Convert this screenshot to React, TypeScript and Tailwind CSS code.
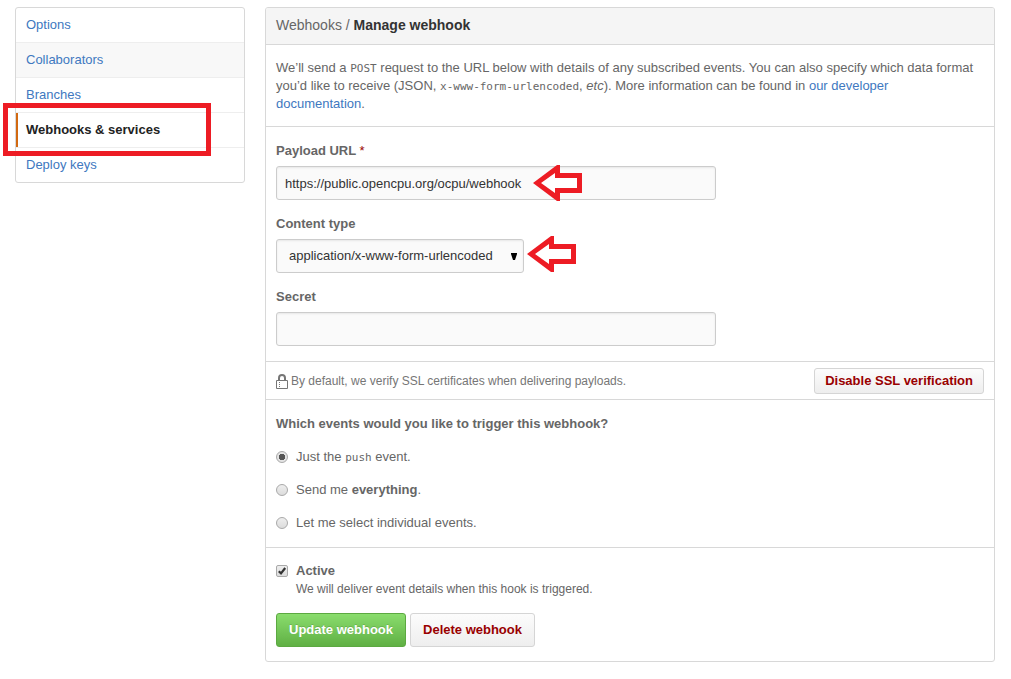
import type { ReactNode } from "react";

const navItems = [
  { label: "Options" },
  { label: "Collaborators", hovered: true },
  { label: "Branches" },
  { label: "Webhooks & services", current: true },
  { label: "Deploy keys" },
];

function Code({ children }: { children: ReactNode }) {
  return <code className="font-['DejaVu_Sans_Mono',monospace] text-[11px] leading-none">{children}</code>;
}

function Arrow({ className }: { className: string }) {
  return (
    <svg aria-hidden="true" width="49" height="36" viewBox="0 0 49 36" className={`pointer-events-none absolute ${className}`}>
      <path d="M0 18 24 0h3v8h22v20H27v8h-3Z" fill="#ed1c24" />
      <path d="M8 18 22 8v5h22v10H22v5Z" fill="#fff" />
    </svg>
  );
}

function LockIcon() {
  return (
    <svg aria-hidden="true" width="12" height="15" viewBox="0 0 12 15" fill="none">
      <path d="M3 6V4a3 3 0 0 1 6 0v2" stroke="#767676" strokeWidth="2" />
      <path d="M.5 6.5h11v8H.5Z" stroke="#767676" />
      <path d="M3 8h1v1H3zM3 10h1v1H3zM3 12h1v1H3z" fill="#767676" />
    </svg>
  );
}

function Sidebar() {
  return (
    <nav className="w-[230px] shrink-0 rounded-[3px] border border-[#d8d8d8]">
      <ul>
        {navItems.map((item) => (
          <li key={item.label} className="relative border-b border-[#eee] last:border-b-0">
            <a
              href="#"
              aria-current={item.current ? "page" : undefined}
              className={`block border-l-2 px-2 py-2 leading-[18px] ${
                item.current
                  ? "border-[#d26911] font-bold text-[#222]"
                  : item.hovered
                    ? "border-transparent bg-[#f8f8f8] text-[#4078c0]"
                    : "border-transparent text-[#4078c0]"
              }`}
            >
              {item.label}
            </a>
            {item.current && (
              <span className="pointer-events-none absolute -top-[10px] -left-[13px] z-10 h-[53px] w-[208px] border-5 border-[#ed1c24]" />
            )}
          </li>
        ))}
      </ul>
    </nav>
  );
}

const fieldClass =
  "h-[34px] rounded-[3px] border border-[#ccc] bg-[#fafafa] text-[13px] text-[#333] shadow-[inset_0_1px_2px_rgba(0,0,0,0.075)] outline-none";

const grayButton =
  "rounded-[3px] border border-[#d5d5d5] bg-linear-to-b from-[#fcfcfc] to-[#eee] font-bold text-[#900]";

function Radio({ id, checked, children }: { id: string; checked?: boolean; children: ReactNode }) {
  return (
    <div className="mt-[15px] flex items-center gap-2">
      <input
        type="radio"
        id={id}
        name="events"
        defaultChecked={checked}
        className="size-3 appearance-none rounded-full border border-[#a9a9a9] bg-linear-to-b from-[#eee] to-[#dcdcdc] checked:bg-[radial-gradient(circle,#555_0_3px,#e4e4e4_3.5px)]"
      />
      <label htmlFor={id}>{children}</label>
    </div>
  );
}

export default function App() {
  return (
    <div className="flex items-start gap-5 bg-white pt-[7px] pr-4 pb-[17px] pl-[15px] font-['Liberation_Sans',Arial,sans-serif] text-[13px] leading-[18px] text-[#666]">
      <Sidebar />
      <main className="min-w-0 flex-1 divide-y divide-[#d8d8d8] rounded-[3px] border border-[#d8d8d8]">
        <h1 className="rounded-t-[2px] bg-[#f5f5f5] px-[10px] pt-2 pb-[10px] text-[14px] leading-[18px]">
          Webhooks / <strong className="text-[#333]">Manage webhook</strong>
        </h1>

        <p className="pt-[14px] pr-4 pb-[13px] pl-[10px]">
          We’ll send a <Code>POST</Code> request to the URL below with details of any subscribed events. You can also
          specify which data format you’d like to receive (JSON, <Code>x-www-form-urlencoded</Code>, <em>etc</em>). More
          information can be found in{" "}
          <a href="#" className="text-[#4078c0]">
            our developer documentation
          </a>
          .
        </p>

        <div className="flex flex-col gap-[15px] px-[10px] py-[15px]">
          <div>
            <label htmlFor="url" className="mb-[6px] block font-bold">
              Payload URL <span className="font-normal text-[#900]">*</span>
            </label>
            <div className="relative w-[440px]">
              <input id="url" type="text" defaultValue="https://public.opencpu.org/ocpu/webhook" className={`${fieldClass} block w-full px-2`} />
              <Arrow className="-top-px left-[257px]" />
            </div>
          </div>
          <div>
            <label htmlFor="ctype" className="mb-[6px] block font-bold">
              Content type
            </label>
            <div className="relative w-[248px]">
              <select id="ctype" className={`${fieldClass} block w-full appearance-none px-3`}>
                <option>application/x-www-form-urlencoded</option>
                <option>application/json</option>
              </select>
              <svg aria-hidden="true" width="6" height="7" viewBox="0 0 6 7" className="pointer-events-none absolute top-[14px] right-[7px]">
                <path d="M0 0h6v1L4 7H2L0 1Z" fill="#000" />
              </svg>
              <Arrow className="-top-[3px] left-[251px]" />
            </div>
          </div>
          <div>
            <label htmlFor="secret" className="mb-[6px] block font-bold">
              Secret
            </label>
            <div className="w-[440px]">
              <input id="secret" type="text" className={`${fieldClass} block w-full px-2`} />
            </div>
          </div>
        </div>

        <div className="flex items-center justify-between px-[10px] pt-[6px] pb-[5px]">
          <p className="flex items-center gap-[3px] text-[12px] text-[#767676]">
            <LockIcon />
            By default, we verify SSL certificates when delivering payloads.
          </p>
          <button type="button" className={`${grayButton} h-[26px] px-[10px]`}>
            Disable SSL verification
          </button>
        </div>

        <fieldset className="px-[10px] py-[15px]">
          <legend className="float-left w-full font-bold">Which events would you like to trigger this webhook?</legend>
          <div className="clear-both flow-root">
            <Radio id="push" checked>
              Just the <Code>push</Code> event.
            </Radio>
            <Radio id="everything">
              Send me <strong>everything</strong>.
            </Radio>
            <Radio id="individual">Let me select individual events.</Radio>
          </div>
        </fieldset>

        <div className="px-[10px] py-[14px]">
          <div className="flex items-center gap-2">
            <span className="relative size-3">
              <input
                type="checkbox"
                id="active"
                defaultChecked
                className="peer block size-3 appearance-none rounded-[2px] border border-[#a9a9a9] bg-linear-to-b from-[#eee] to-[#dcdcdc]"
              />
              <svg aria-hidden="true" viewBox="0 0 12 12" className="pointer-events-none absolute inset-0 hidden size-3 peer-checked:block">
                <path d="M2.8 6.2 5 8.4 9.2 3" fill="none" stroke="#333" strokeWidth="2.2" />
              </svg>
            </span>
            <label htmlFor="active" className="font-bold">
              Active
            </label>
          </div>
          <p className="pl-5 text-[12px] leading-[18px]">We will deliver event details when this hook is triggered.</p>
          <div className="mt-[15px] flex gap-1">
            <button
              type="submit"
              className="h-[34px] rounded-[3px] border border-[#5ca941] bg-linear-to-b from-[#8add6d] to-[#60b044] px-3 font-bold text-white [text-shadow:0_-1px_0_rgba(0,0,0,0.15)]"
            >
              Update webhook
            </button>
            <button type="button" className={`${grayButton} h-[34px] px-3`}>
              Delete webhook
            </button>
          </div>
        </div>
      </main>
    </div>
  );
}
